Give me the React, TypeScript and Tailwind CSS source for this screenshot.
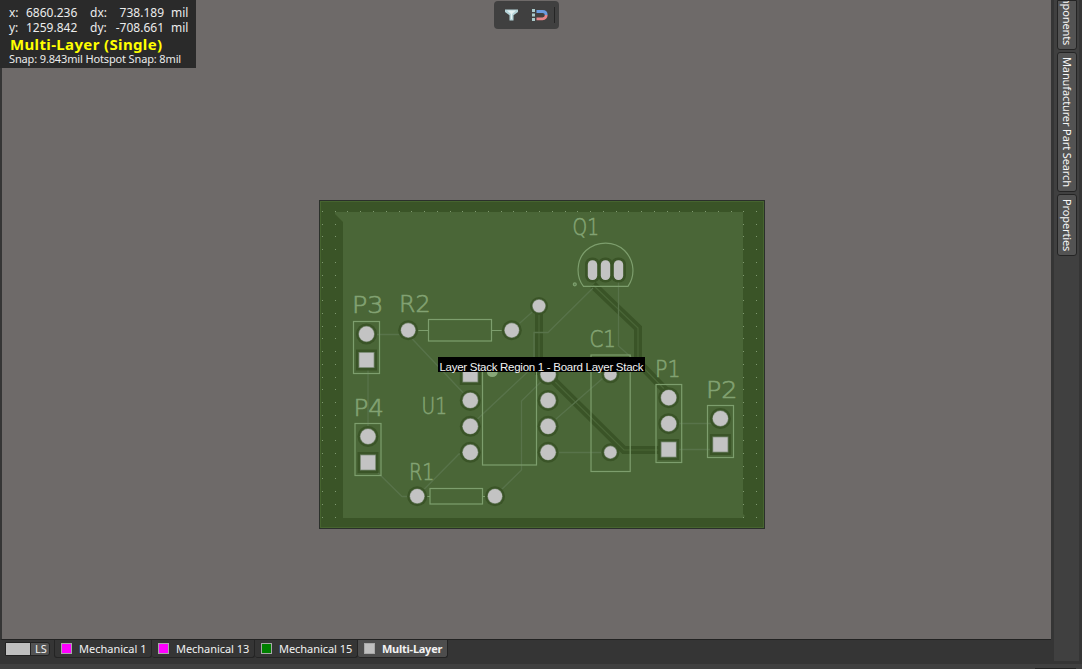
import React from 'react';

const SILK = '#7d9e6d';
const DARK = '#3a5427';
const LIT = '#4a6637';
const TRACE = '#58734a';
const PAD = '#c3c3c3';

function RoundPad({ x, y, r = 8, halo = 10.5 }: { x: number; y: number; r?: number; halo?: number }) {
  return (
    <g>
      <circle cx={x} cy={y} r={halo} fill={DARK} />
      <circle cx={x} cy={y} r={r + 0.2} fill="#71826a" />
      <circle cx={x} cy={y} r={r - 0.4} fill={PAD} />
    </g>
  );
}

function SquarePad({ x, y }: { x: number; y: number }) {
  return (
    <g>
      <rect x={x - 10.5} y={y - 10.5} width={21} height={21} fill={DARK} />
      <rect x={x - 8} y={y - 8} width={16} height={16} fill="#71826a" />
      <rect x={x - 7.2} y={y - 7.2} width={14.4} height={14.4} fill={PAD} />
    </g>
  );
}

const LABELS: [string, number, number, number][] = [
  ['P3', 352.5, 313, 30],
  ['R2', 399.5, 312, 30],
  ['P4', 354, 416, 29],
  ['U1', 422, 414, 24],
  ['R1', 409.5, 480.5, 24],
  ['Q1', 573, 235.5, 25],
  ['C1', 590, 347, 25],
  ['P1', 655.5, 377, 24],
  ['P2', 706.5, 398, 30],
];

const BOXES: [number, number, number, number][] = [
  [353.5, 321.5, 26, 52],
  [355, 423.5, 26, 52],
  [428.5, 319.5, 63, 21.5],
  [430, 488.5, 52.5, 15.5],
  [482.5, 366, 54, 99],
  [591, 355, 39.2, 116.5],
  [656, 384.5, 25.7, 78],
  [707.5, 405.5, 26, 52],
];

function dots() {
  const out: React.ReactNode[] = [];
  for (let r = 0; r <= 24; r++) {
    for (let c = 0; c <= 34; c++) {
      if (r === 0 || c < 2 || c > 32) {
        out.push(
          <rect key={`${r}-${c}`} x={Math.floor(322.4 + c * 12.77)} y={Math.floor(211.4 + r * 12.74)} width={1} height={1} fill="#809a70" />,
        );
      }
    }
  }
  return out;
}

function Board() {
  return (
    <svg className="block h-[329px] w-[446px] shrink-0" viewBox="319 200 446 329">
      <rect x={319} y={200} width={446} height={329} fill="#2b302b" />
      <rect x={320} y={201} width={444} height={327} fill="#46642f" />
      <rect x={321} y={202} width={442} height={325} fill={DARK} />
      <path d="M335 212H743V514L745 516L743 518H343V222L335 214Z" fill={LIT} />
      {dots()}
      <g fill="none" stroke={DARK} strokeWidth={8}>
        <path d="M539 306V375M548 375L624 450H669M593 285L638 328V362L669 394" />
      </g>
      <g fill="none" stroke={LIT} strokeWidth={1.2}>
        <path d="M539 306V375M548 375L624 450H669M593 285L638 328V362L669 394" />
      </g>
      <g fill="none" stroke={TRACE} strokeWidth={1.3}>
        <path d="M367 334.5H408L470 400M368 360V437M368 463L402 496.5H417L459 454H470M512 330L539 306M593 288L548 332.5H534V366L470 426M618.5 270V346L632 358M548 375L521.5 401V470L495 496M548 426L610 372M548 452.5H610M669 423.5H720M669 449.5H720" />
      </g>
      <g fill="none" stroke={SILK} strokeWidth={1.2}>
        {BOXES.map(([x, y, w, h]) => (
          <rect key={`${x}-${y}`} x={x} y={y} width={w} height={h} />
        ))}
        <path d="M416 330.5H428M492 330.5H504M427 496.5H430M482 496.5H486" />
        <path d="M583.5 286.3C575.8 277 576 260 586 250.5C598 240.5 614 241 624.5 250.5C634.8 261 635.3 276 628 286.3Z" />
        <circle cx={574.8} cy={284.3} r={1.5} fill="#5d8050" />
      </g>
      <circle cx={492.3} cy={371.5} r={5.5} fill="#89a878" />
      <RoundPad x={366.5} y={334} />
      <SquarePad x={366.5} y={360} />
      <RoundPad x={368} y={436.5} />
      <SquarePad x={368} y={462.5} />
      <RoundPad x={408.2} y={330.3} r={7.5} halo={10} />
      <RoundPad x={511.8} y={330.3} r={7.5} halo={10} />
      <RoundPad x={539} y={306} r={6.7} halo={9} />
      <RoundPad x={417.2} y={496.2} r={7.5} halo={10} />
      <RoundPad x={495} y={496.2} r={7.5} halo={10} />
      <SquarePad x={470.3} y={374.5} />
      <RoundPad x={470.3} y={400.4} />
      <RoundPad x={470.3} y={426.3} />
      <RoundPad x={470.3} y={452.3} />
      <RoundPad x={548.1} y={374.5} />
      <RoundPad x={548.1} y={400.4} />
      <RoundPad x={548.1} y={426.3} />
      <RoundPad x={548.1} y={452.3} />
      <RoundPad x={610.4} y={374.3} r={6.5} halo={9} />
      <RoundPad x={610.4} y={452.3} r={6.5} halo={9} />
      <RoundPad x={668.7} y={397.7} />
      <RoundPad x={668.7} y={423.7} />
      <SquarePad x={668.7} y={449.5} />
      <RoundPad x={720.4} y={418.5} />
      <SquarePad x={720.4} y={444.5} />
      {[592.5, 605.5, 618.5].map((x) => (
        <rect key={x} x={x - 7.5} y={257.5} width={15} height={25} rx={7} fill={DARK} />
      ))}
      {[592.5, 605.5, 618.5].map((x) => (
        <rect key={x} x={x - 4.7} y={260.3} width={9.4} height={19.8} rx={4.5} fill={PAD} />
      ))}
      <g fill="#82a272" stroke="#82a272" strokeWidth={0.6} fontFamily="'DejaVu Sans', sans-serif" fontWeight={200} fontSize={22.5}>
        {LABELS.map(([t, x, y, w]) => (
          <text key={t} x={x - 0.5} y={y - 0.5} textLength={w + 1.5} lengthAdjust="spacingAndGlyphs">
            {t}
          </text>
        ))}
      </g>
      <rect x={438} y={357} width={207} height={15} fill="#000" />
      <text x={439.5} y={370.5} textLength={204} fill="#f2f2f2" fontFamily="'Liberation Sans', sans-serif" fontSize={11.5}>
        Layer Stack Region 1 - Board Layer Stack
      </text>
    </svg>
  );
}

function Readout() {
  return (
    <div className="flex h-[68px] w-[196px] flex-col bg-[#2a2a2a] pl-[9px] pt-[5px] text-[12px] leading-[15px] text-[#ececec]">
      <div className="flex h-[15px] whitespace-pre">
        <span className="w-[17px]">x:</span>
        <span className="w-[64px]">6860.236</span>
        <span className="w-[17px]">dx:</span>
        <span className="w-[57px] text-right">738.189</span>
        <span className="ml-[7px]">mil</span>
      </div>
      <div className="flex h-[15px] whitespace-pre">
        <span className="w-[17px]">y:</span>
        <span className="w-[64px]">1259.842</span>
        <span className="w-[17px]">dy:</span>
        <span className="w-[57px] text-right">-708.661</span>
        <span className="ml-[7px]">mil</span>
      </div>
      <div className="h-[17px] whitespace-nowrap pl-px text-[15px] font-bold leading-[19px] tracking-[0.36px] text-[#ffff00]">Multi-Layer (Single)</div>
      <div className="whitespace-nowrap text-[11px] leading-[14px] tracking-[-0.14px]">Snap: 9.843mil Hotspot Snap: 8mil</div>
    </div>
  );
}

function SideTab({ label, className }: { label: string; className: string }) {
  return (
    <div className={`flex w-[20px] justify-center rounded-[3px] border border-[#242424] bg-[#535353] text-[11px] leading-[18px] tracking-[-0.12px] text-[#f8f8f8] ${className}`}>
      <span className="whitespace-nowrap [writing-mode:vertical-rl]">{label}</span>
    </div>
  );
}

function LayerTab({ label, swatch, className }: { label: string; swatch: string; className: string }) {
  return (
    <div className={`flex h-[18px] items-center rounded-b-[3px] border-b border-r border-[#242424] pl-[6px] ${className}`}>
      <span className={`mb-px mr-[7px] h-[11px] w-[11px] shrink-0 border border-[#a8a8a8] ${swatch}`} />
      <span className="whitespace-nowrap">{label}</span>
    </div>
  );
}

export default function App() {
  return (
    <div className="flex h-[669px] w-[1082px] flex-col overflow-hidden bg-[#353535] font-['Noto_Sans',sans-serif]">
      <div className="flex h-[661px]">
        <div className="flex w-[1054px] flex-col">
          <div className="mr-[3px] flex h-[640px] flex-col border-b border-l-2 border-b-[#222] border-l-[#353535] bg-[#6e6a69]">
            <div className="flex h-[200px] items-start">
              <div className="-ml-[2px] border-l-2 border-[#202020] bg-[#2a2a2a]">
                <div className="-ml-[2px]">
                  <Readout />
                </div>
              </div>
              <div className="ml-[298px] mt-px flex h-[28px] w-[65px] items-center rounded-[4px] bg-[#404040]">
                <svg className="ml-[11px] h-[14px] w-[13px]" viewBox="0 0 13 14">
                  <path d="M0 1.5H13V4L8.5 7.2V12.5H4.5V7.2L0 4Z" fill="#b5d3d8" />
                  <path d="M2 2.5H11L7 6V11H6V6Z" fill="#e4f2f3" />
                </svg>
                <svg className="ml-[14px] h-[14px] w-[16px]" viewBox="0 0 16 14">
                  <path d="M0 1H3V4H0ZM0 5.5H3V8.5H0ZM0 10H3V13H0Z" fill="#a9c9ca" />
                  <path d="M4.5 3.5H10.5C13 3.5 14.2 5.2 14.2 7" fill="none" stroke="#6a9be0" strokeWidth={2.8} />
                  <path d="M14.2 7C14.2 9 13 10.8 10.5 10.8H4.5" fill="none" stroke="#e68589" strokeWidth={2.8} />
                </svg>
                <span className="ml-[6px] h-[16px] w-px bg-[#252525]" />
              </div>
            </div>
            <div className="flex pl-[317px]">
              <Board />
            </div>
          </div>
          <div className="flex h-[21px] items-start text-[11px] leading-[16px] text-[#f2f2f2]">
            <div className="ml-[5px] mt-[2px] flex h-[14px] w-[45px] items-stretch rounded-r-[3px] border border-[#222] bg-[#535353]">
              <span className="w-[25px] border-r border-[#222] bg-[#c0c0c0]" />
              <span className="pl-[4px] text-[11px] leading-[12px]">LS</span>
            </div>
            <div className="ml-[4px] flex">
              <LayerTab label="Mechanical 1" swatch="bg-[#ff00ff]" className="w-[98px] border-l" />
              <LayerTab label="Mechanical 13" swatch="bg-[#ff00ff]" className="w-[103px] tracking-[-0.05px]" />
              <LayerTab label="Mechanical 15" swatch="bg-[#008000]" className="w-[103px] tracking-[-0.05px]" />
              <LayerTab label="Multi-Layer" swatch="bg-[#bfbfbf]" className="w-[90px] bg-[#4d4d4d] font-bold tracking-[-0.25px]" />
            </div>
          </div>
        </div>
        <div className="flex w-[25px] flex-col bg-[#404040] pl-[3px]">
          <SideTab label="Components" className="h-[50px] items-end overflow-hidden rounded-t-none pb-[4px]" />
          <SideTab label="Manufacturer Part Search" className="mt-[2px] h-[140px] items-start pt-[4px]" />
          <SideTab label="Properties" className="mt-[2px] h-[62px] items-start pt-[4px]" />
        </div>
      </div>
      <div className="mt-[3px] h-[5px] bg-[#404040]">
        <div className="ml-[1035px] mt-[4px] h-px w-[41px] bg-[#222]" />
      </div>
    </div>
  );
}
